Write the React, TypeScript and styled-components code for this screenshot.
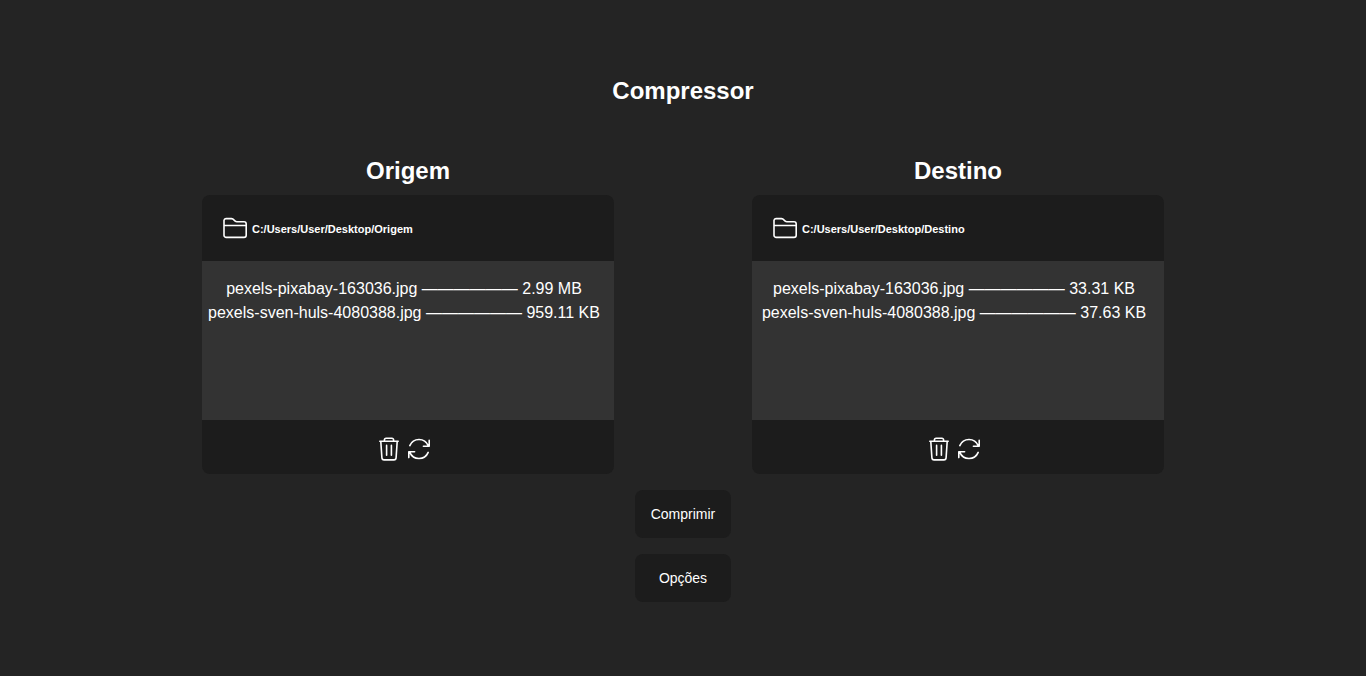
import React from "react";
import styled, { createGlobalStyle } from "styled-components";

const GlobalStyle = createGlobalStyle`
  *, *::before, *::after { box-sizing: border-box; }
  body {
    margin: 0;
    background: #242424;
    color: #fff;
    font-family: Arial, "Liberation Sans", sans-serif;
    font-size: 16px;
    line-height: 24px;
  }
`;

const Page = styled.main`
  display: flex;
  flex-direction: column;
  align-items: center;
  min-height: 100vh;
  padding: 73px 16px 72px;
`;

const Title = styled.h1`
  margin: 0 0 44px;
  font-size: 24px;
  line-height: 36px;
`;

const Panels = styled.div`
  display: grid;
  grid-template-columns: repeat(2, minmax(0, 412px));
  justify-content: space-between;
  gap: 16px;
  width: 100%;
  max-width: 962px;
  margin-bottom: 16px;
`;

const Column = styled.section`
  text-align: center;
`;

const PanelTitle = styled.h2`
  margin: 0 0 6px;
  font-size: 24px;
  line-height: 36px;
`;

const Card = styled.div`
  overflow: hidden;
  border-radius: 8px;
  background: #1c1c1c;
`;

const CardHeader = styled.header`
  display: flex;
  align-items: center;
  height: 66px;
  padding: 0 20px;
`;

const FolderButton = styled.button`
  display: flex;
  align-items: center;
  gap: 4px;
  padding: 0;
  border: 0;
  background: none;
  color: inherit;
  font: bold 11px/16px Arial, "Liberation Sans", sans-serif;
  cursor: pointer;
`;

const PathLabel = styled.span`
  padding-top: 2px;
`;

const FileList = styled.ul`
  min-height: 159px;
  margin: 0;
  padding: 16px 8px 16px 0;
  background: #333;
  list-style: none;
  white-space: nowrap;
`;

const CardFooter = styled.footer`
  display: flex;
  align-items: center;
  justify-content: center;
  gap: 4px;
  height: 54px;
  padding: 4px 8px 0 0;
`;

const IconButton = styled.button`
  display: flex;
  padding: 0;
  border: 0;
  background: none;
  color: inherit;
  cursor: pointer;
`;

const Actions = styled.div`
  display: flex;
  flex-direction: column;
  gap: 16px;
`;

const ActionButton = styled.button`
  min-width: 96px;
  height: 48px;
  padding: 0 16px;
  border: 0;
  border-radius: 8px;
  background: #1c1c1c;
  color: inherit;
  font: 14px/20px Arial, "Liberation Sans", sans-serif;
  cursor: pointer;
`;

const Icon = styled.svg.attrs({ viewBox: "0 0 26 26", "aria-hidden": true })`
  width: 26px;
  height: 26px;
  fill: none;
  stroke: currentColor;
  stroke-width: 1.6;
  stroke-linecap: round;
  stroke-linejoin: round;
`;

const FolderIcon = () => (
  <Icon>
    <path d="M2 10.5V5.4A2 2 0 0 1 4 3.6H9.4A2.4 2.4 0 0 1 11 4.2L13.2 6.2A2.4 2.4 0 0 0 14.8 6.8H22A2.2 2.2 0 0 1 24.2 9V20.2A2.2 2.2 0 0 1 22 22.4H4.2A2.2 2.2 0 0 1 2 20.2ZM2 10.5H24.2" />
  </Icon>
);

const TrashIcon = () => (
  <Icon>
    <path d="M3.8 5.2H22.2M8.4 5V3.9A1.7 1.7 0 0 1 10.1 2.2H15.9A1.7 1.7 0 0 1 17.6 3.9V5M4.8 5.4L5.9 21.8A2.2 2.2 0 0 0 8.1 23.9H17.9A2.2 2.2 0 0 0 20.1 21.8L21.2 5.4M10.6 9.4V19.2M15.4 9.4V19.2" />
  </Icon>
);

const RefreshIcon = () => (
  <Icon>
    <path d="M3.8 9.6A10 10 0 0 1 22.2 9.6M23.2 4.4V10.2H17.4M22.2 16.4A10 10 0 0 1 3.8 16.4M2.8 21.6V15.8H8.6" />
  </Icon>
);

interface FileEntry {
  name: string;
  size: string;
}

interface PanelProps {
  title: string;
  path: string;
  files: FileEntry[];
}

const Panel = ({ title, path, files }: PanelProps) => (
  <Column>
    <PanelTitle>{title}</PanelTitle>
    <Card>
      <CardHeader>
        <FolderButton type="button">
          <FolderIcon />
          <PathLabel>{path}</PathLabel>
        </FolderButton>
      </CardHeader>
      <FileList>
        {files.map((file) => (
          <li key={file.name}>{`${file.name} —————— ${file.size}`}</li>
        ))}
      </FileList>
      <CardFooter>
        <IconButton type="button" aria-label="Excluir">
          <TrashIcon />
        </IconButton>
        <IconButton type="button" aria-label="Atualizar">
          <RefreshIcon />
        </IconButton>
      </CardFooter>
    </Card>
  </Column>
);

const sourceFiles: FileEntry[] = [
  { name: "pexels-pixabay-163036.jpg", size: "2.99 MB" },
  { name: "pexels-sven-huls-4080388.jpg", size: "959.11 KB" },
];

const targetFiles: FileEntry[] = [
  { name: "pexels-pixabay-163036.jpg", size: "33.31 KB" },
  { name: "pexels-sven-huls-4080388.jpg", size: "37.63 KB" },
];

export default function App() {
  return (
    <>
      <GlobalStyle />
      <Page>
        <Title>Compressor</Title>
        <Panels>
          <Panel title="Origem" path="C:/Users/User/Desktop/Origem" files={sourceFiles} />
          <Panel title="Destino" path="C:/Users/User/Desktop/Destino" files={targetFiles} />
        </Panels>
        <Actions>
          <ActionButton type="button">Comprimir</ActionButton>
          <ActionButton type="button">Opções</ActionButton>
        </Actions>
      </Page>
    </>
  );
}
